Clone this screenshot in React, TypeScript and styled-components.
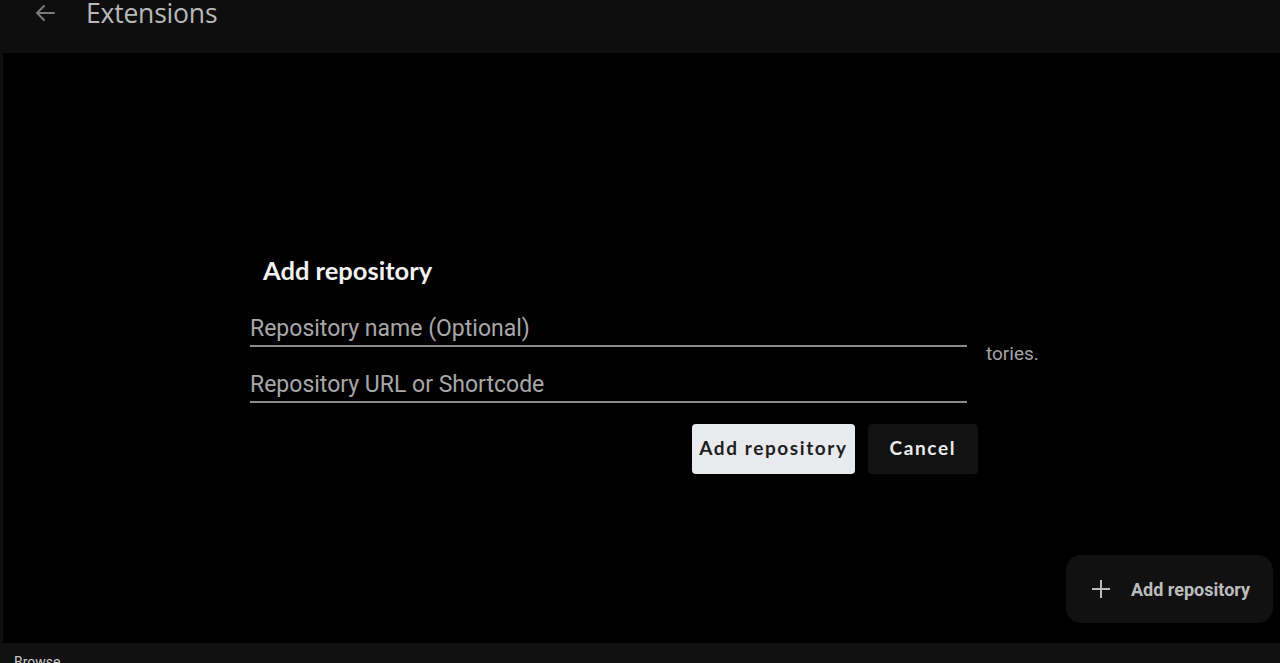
import React, { useState } from 'react';
import styled, { createGlobalStyle } from 'styled-components';

const GlobalStyle = createGlobalStyle`
  html, body {
    margin: 0;
    padding: 0;
    background: #000;
    overflow: hidden;
  }
  * { box-sizing: border-box; }
`

const Screen = styled.div`
  width: 1280px;
  height: 663px;
  display: flex;
  flex-direction: column;
  background: #000;
  font-family: Roboto, "Liberation Sans", sans-serif;
`

const TopBar = styled.div`
  height: 53px;
  flex: none;
  display: flex;
  align-items: flex-start;
  background: #0e0e0e;
  padding-left: 33px;
`

const BackIcon = styled.svg`
  width: 24px;
  height: 24px;
  margin-top: 1px;
  margin-right: 29px;
`

const PageTitle = styled.div`
  font-family: "Open Sans", sans-serif;
  font-size: 26.5px;
  line-height: 27px;
  color: #b9b9b9;
  letter-spacing: -0.2px;
`

const Body = styled.div`
  flex: 1;
  position: relative;
  display: flex;
  border-left: 3px solid #0f0f0f;
  padding-left: 247px;
`

const Dialog = styled.div`
  margin-top: 202px;
  width: 728px;
  display: flex;
  flex-direction: column;
`

const DialogTitle = styled.div`
  font-family: Lato, sans-serif;
  font-weight: 700;
  font-size: 25.5px;
  color: #f2f2f2;
  padding-left: 13px;
  margin-bottom: 22px;
`

const Field = styled.input`
  width: 717px;
  height: 40px;
  background: transparent;
  border: none;
  border-bottom: 2px solid #8a8a8a;
  padding: 4px 0 0;
  font-family: Roboto, sans-serif;
  font-size: 23px;
  color: #ddd;
  outline: none;
  margin-bottom: 16px;
  &::placeholder { color: #a8a8a8; }
`

const Actions = styled.div`
  display: flex;
  justify-content: flex-end;
  gap: 13px;
  margin-top: 5px;
`

const DialogButton = styled.button<{ $primary?: boolean }>`
  height: 50px;
  padding: 0 ${p => (p.$primary ? '7px' : '22px')} 3px;
  border: none;
  border-radius: 4px;
  background: ${p => (p.$primary ? '#e9eaee' : '#121212')};
  color: ${p => (p.$primary ? '#1e1e1e' : '#ececec')};
  font-family: Lato, sans-serif;
  font-weight: 700;
  font-size: 19px;
  letter-spacing: 1.6px;
  cursor: pointer;
`

const BehindText = styled.div`
  position: absolute;
  left: 983px;
  top: 289px;
  font-family: Roboto, sans-serif;
  font-size: 19px;
  color: #a5a5a5;
`

const Fab = styled.button`
  position: absolute;
  right: 7px;
  bottom: 20px;
  width: 207px;
  height: 68px;
  display: flex;
  align-items: center;
  gap: 19px;
  padding-left: 24px;
  border: none;
  border-radius: 15px;
  background: #111;
  color: #bdbdbd;
  font-family: Roboto, sans-serif;
  font-weight: 700;
  font-size: 18px;
  cursor: pointer;
`

const BottomBar = styled.div`
  height: 20px;
  flex: none;
  background: #111;
  padding: 11px 0 0 14px;
  font-size: 14px;
  color: #ccc;
  overflow: hidden;
`

export default function App() {
  const [name, setName] = useState('');
  const [url, setUrl] = useState('');

  return (
    <Screen>
      <GlobalStyle />
      <TopBar>
        <BackIcon viewBox="0 0 24 24" fill="none" stroke="#7a7a7a" strokeWidth="2" strokeLinecap="round">
          <path d="M21 12H4M11 5l-7 7 7 7" />
        </BackIcon>
        <PageTitle>Extensions</PageTitle>
      </TopBar>
      <Body>
        <BehindText>tories.</BehindText>
        <Dialog>
          <DialogTitle>Add repository</DialogTitle>
          <Field placeholder="Repository name (Optional)" value={name} onChange={e => setName(e.target.value)} />
          <Field placeholder="Repository URL or Shortcode" value={url} onChange={e => setUrl(e.target.value)} />
          <Actions>
            <DialogButton $primary>Add repository</DialogButton>
            <DialogButton>Cancel</DialogButton>
          </Actions>
        </Dialog>
        <Fab>
          <svg width="22" height="22" viewBox="0 0 22 22" stroke="#bdbdbd" strokeWidth="2">
            <path d="M11 2v18M2 11h18" />
          </svg>
          Add repository
        </Fab>
      </Body>
      <BottomBar>Browse</BottomBar>
    </Screen>
  );
}
